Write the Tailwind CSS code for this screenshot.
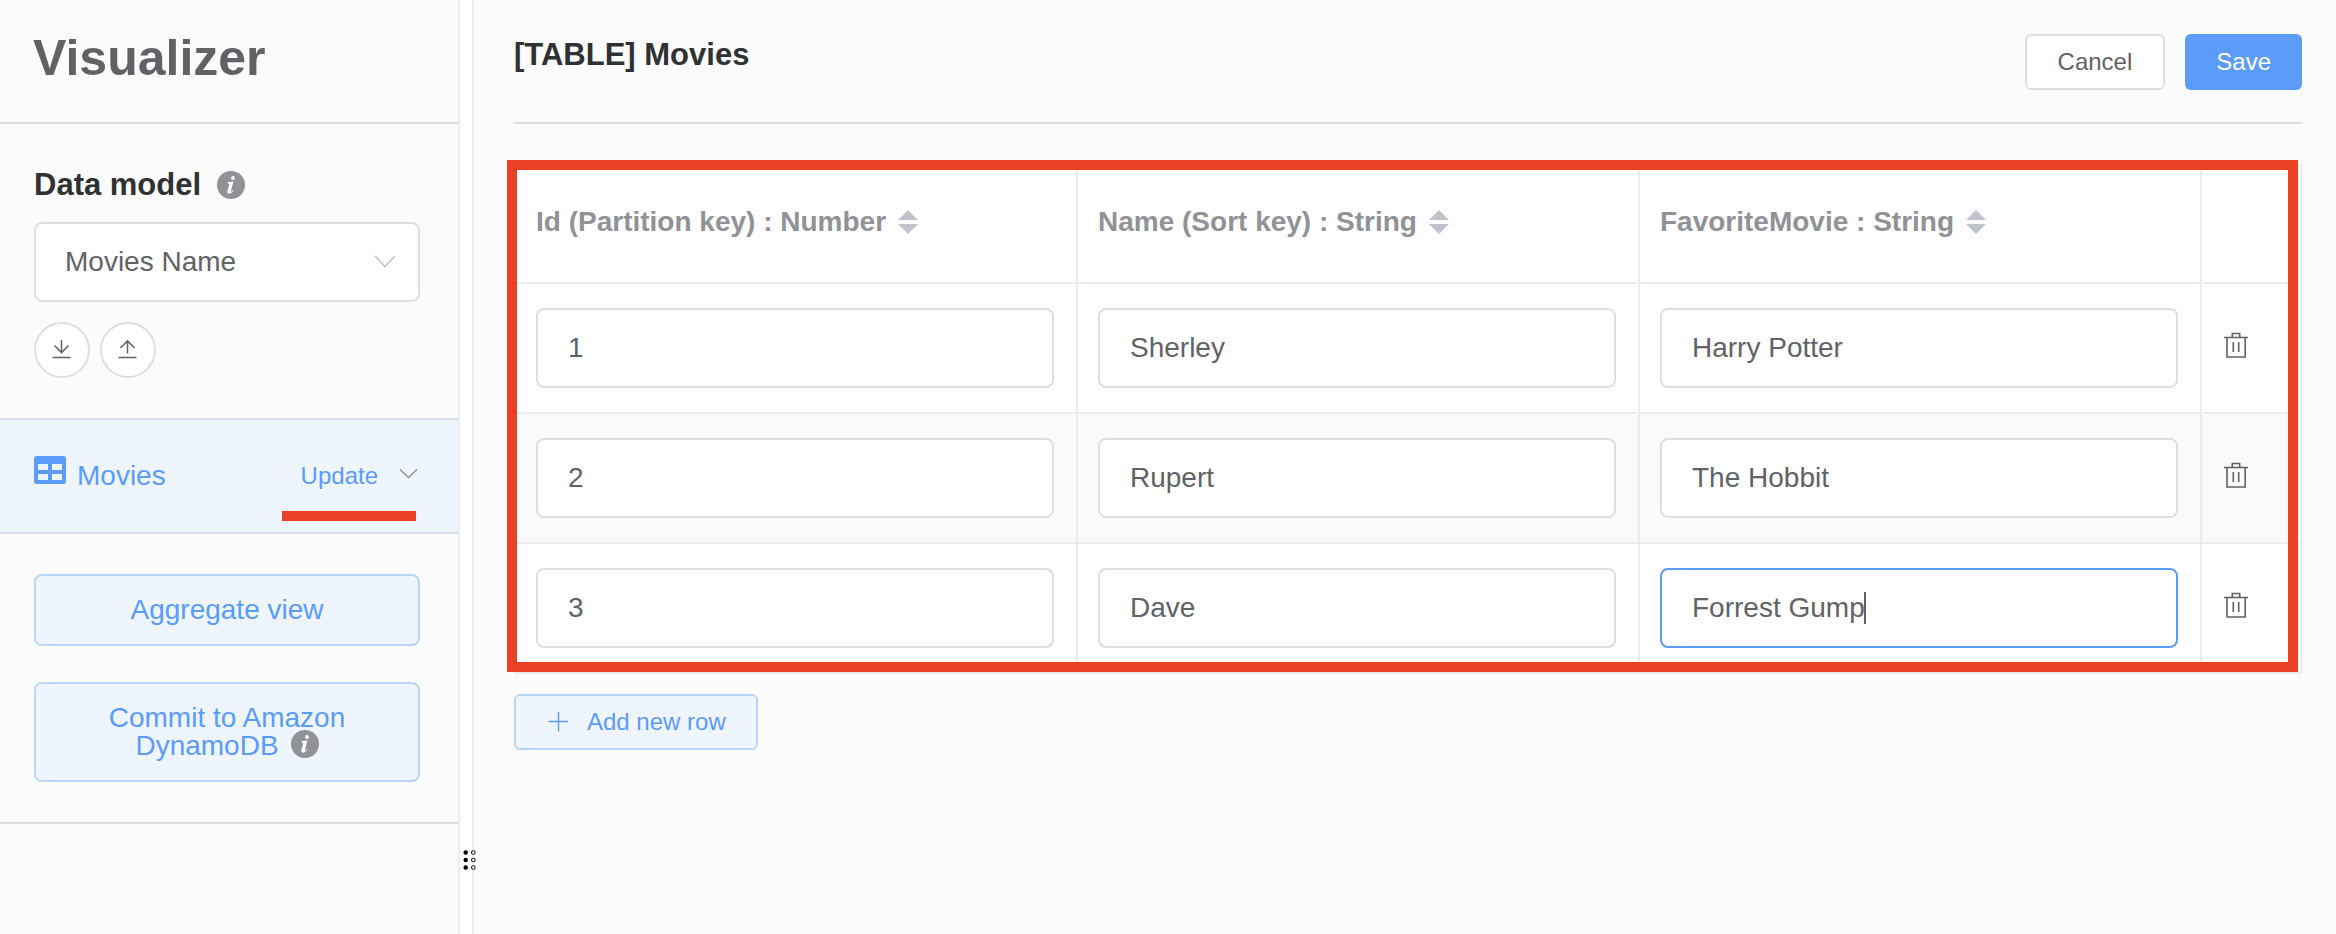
<!DOCTYPE html>
<html lang="en">
<head>
<meta charset="utf-8">
<meta name="viewport" content="width=device-width, initial-scale=1">
<title>Visualizer</title>
<script src="https://cdn.jsdelivr.net/npm/@tailwindcss/browser@4"></script>
</head>
<body class="bg-[#fbfbfb] font-['Liberation_Sans',Arial,sans-serif] text-[28px] text-[#616266]">
<svg class="hidden" aria-hidden="true">
  <symbol id="info" viewBox="0 0 28 28">
    <circle cx="14" cy="14" r="14" fill="#919297"/>
    <circle cx="16" cy="7" r="1.9" fill="#fff"/>
    <path fill="#fff" d="M10.4 11.3 16.4 10.6 13.9 20Q13.7 21 14.6 20.4L15.8 19 16.5 19.5Q14.2 22.8 11.9 22.7 9.9 22.4 10.4 20.2L12.2 13.6Q12.4 12.3 10.4 12.2Z"/>
  </symbol>
  <symbol id="sort" viewBox="0 0 20 24">
    <path fill="#c0c3cc" d="M10 0 20 10H0ZM10 24 0 14H20Z"/>
  </symbol>
  <symbol id="trash" viewBox="0 0 28 28">
    <path fill="none" stroke="#616266" stroke-width="1.6" d="M2 6.5H26M10.3 6V2.5H17.7V6M5 7V26H23.2V7M11.3 11V21M16.7 11V21"/>
  </symbol>
</svg>
<div class="flex min-h-screen">
  <aside class="w-[460px] shrink-0 border-r-2 border-[#ebebf0]">
    <header class="border-b-2 border-[#dddee4] px-[33px] pt-7 pb-[34px]">
      <h1 class="text-[50px] leading-[60px] font-bold">Visualizer</h1>
    </header>
    <section class="pt-10 pr-[38px] pb-10 pl-[34px]">
      <div class="flex items-center gap-4">
        <label for="model" class="text-[31px] leading-[42px] font-bold text-[#303133]">Data model</label>
        <svg class="size-7"><use href="#info"/></svg>
      </div>
      <div class="relative mt-4">
        <select id="model" class="h-20 w-full appearance-none rounded-lg border-2 border-[#dddee4] bg-white px-[29px]">
          <option>Movies Name</option>
        </select>
        <svg class="pointer-events-none absolute top-8 right-6 h-4 w-[22px]" viewBox="0 0 22 16" fill="none" stroke="#c0c4cc" stroke-width="1.6"><path d="M1 2 11 12.5 21 2"/></svg>
      </div>
      <div class="mt-5 flex gap-2.5">
        <button aria-label="Import" class="flex size-14 items-center justify-center rounded-full border-2 border-[#dddee4] bg-white">
          <svg class="size-6" viewBox="0 0 24 24" fill="none" stroke="#616266" stroke-width="1.5"><path d="M2.5 19.5H20.5M11.5 2V14.5M4.5 7.5 11.5 14.6 18.5 7.5"/></svg>
        </button>
        <button aria-label="Export" class="flex size-14 items-center justify-center rounded-full border-2 border-[#dddee4] bg-white">
          <svg class="size-6" viewBox="0 0 24 24" fill="none" stroke="#616266" stroke-width="1.5"><path d="M2.5 19.5H20.5M11.5 15.5V3M4.5 10 11.5 2.9 18.5 10"/></svg>
        </button>
      </div>
    </section>
    <nav class="flex h-[116px] items-center border-y-2 border-[#dddee4] bg-[#eef5ff] pr-10 pl-[34px] text-[#5b9bf9]">
      <a href="#" class="flex items-center gap-[11px]">
        <svg class="mb-3 h-7 w-8" viewBox="0 0 32 28"><path fill="#5b9bf9" fill-rule="evenodd" d="M3 0H29Q32 0 32 3V25Q32 28 29 28H3Q0 28 0 25V3Q0 0 3 0ZM4 8V14H14V8ZM18 8V14H28V8ZM4 18V24H14V18ZM18 18V24H28V18Z"/></svg>
        Movies
      </a>
      <button class="relative ml-auto flex items-center gap-5 text-2xl">
        Update
        <svg class="mb-1 h-3 w-5" viewBox="0 0 20 12" fill="none" stroke="#919297" stroke-width="1.5"><path d="M2 1.5 10.5 9.5 19 1.5"/></svg>
        <span class="absolute top-[51px] right-0.5 h-2.5 w-[134px] bg-[#ea4025]"></span>
      </button>
    </nav>
    <section class="flex flex-col gap-9 border-b-2 border-[#dddee4] pt-10 pr-[38px] pb-10 pl-[34px] leading-7 text-[#5b9bf9]">
      <button class="rounded-lg border-2 border-[#b8d5fb] bg-[#eef5ff] py-5">Aggregate view</button>
      <button class="flex flex-col items-center rounded-lg border-2 border-[#b8d5fb] bg-[#eef5ff] py-5">
        <span>Commit to Amazon</span>
        <span class="flex gap-3">DynamoDB <svg class="-mt-0.5 size-7"><use href="#info"/></svg></span>
      </button>
    </section>
  </aside>

  <div class="relative w-3.5 shrink-0 cursor-col-resize border-r-2 border-[#ebebf0] bg-white">
    <svg class="absolute bottom-16 left-[3px] h-5 w-3.5" viewBox="0 0 14 20"><g fill="#000"><circle cx="2.7" cy="2.5" r="2.2"/><circle cx="2.7" cy="10" r="2.2"/><circle cx="2.7" cy="17.5" r="2.2"/></g><g fill="#fff" stroke="#222" stroke-width="1.1"><circle cx="10.3" cy="2.5" r="1.8"/><circle cx="10.3" cy="10" r="1.8"/><circle cx="10.3" cy="17.5" r="1.8"/></g></svg>
  </div>

  <main class="min-w-0 flex-1 pr-[34px] pl-10">
    <header class="flex items-start gap-5 border-b-2 border-[#dddee4] pt-[34px] pb-8 text-2xl">
      <h2 class="mr-auto text-[31px] leading-[42px] font-bold text-[#303133]">[TABLE] Movies</h2>
      <button class="h-14 rounded-md border-2 border-[#dddee4] bg-white px-[31px]">Cancel</button>
      <button class="h-14 rounded-md bg-[#5b9bf9] px-[31px] text-white">Save</button>
    </header>

    <div class="relative mt-10">
      <table class="w-full table-fixed border-separate border-spacing-0 border-t-2 border-l-2 border-[#ebebf2] bg-white">
        <colgroup><col><col><col><col class="w-[100px]"></colgroup>
        <thead class="text-left leading-8 text-[#919297]">
          <tr>
            <th class="border-r-2 border-b-2 border-[#ebebf2] px-5 pt-10 pb-11"><span class="flex items-center gap-3">Id (Partition key) : Number <svg class="h-6 w-5"><use href="#sort"/></svg></span></th>
            <th class="border-r-2 border-b-2 border-[#ebebf2] px-5 pt-10 pb-11"><span class="flex items-center gap-3">Name (Sort key) : String <svg class="h-6 w-5"><use href="#sort"/></svg></span></th>
            <th class="border-r-2 border-b-2 border-[#ebebf2] px-5 pt-10 pb-11"><span class="flex items-center gap-3">FavoriteMovie : String <svg class="h-6 w-5"><use href="#sort"/></svg></span></th>
            <th class="border-r-2 border-b-2 border-[#ebebf2]"></th>
          </tr>
        </thead>
        <tbody>
          <tr>
            <td class="border-r-2 border-b-2 border-[#ebebf2] py-6 pr-[22px] pl-5"><input aria-label="Id, row 1" value="1" class="block h-20 w-full rounded-lg border-2 border-[#dddee4] bg-white px-[30px]"></td>
            <td class="border-r-2 border-b-2 border-[#ebebf2] py-6 pr-[22px] pl-5"><input aria-label="Name, row 1" value="Sherley" class="block h-20 w-full rounded-lg border-2 border-[#dddee4] bg-white px-[30px]"></td>
            <td class="border-r-2 border-b-2 border-[#ebebf2] py-6 pr-[22px] pl-5"><input aria-label="FavoriteMovie, row 1" value="Harry Potter" class="block h-20 w-full rounded-lg border-2 border-[#dddee4] bg-white px-[30px]"></td>
            <td class="border-r-2 border-b-2 border-[#ebebf2] px-5 pb-1.5"><button aria-label="Delete row 1" class="block"><svg class="size-7"><use href="#trash"/></svg></button></td>
          </tr>
          <tr class="bg-[#fafafa]">
            <td class="border-r-2 border-b-2 border-[#ebebf2] py-6 pr-[22px] pl-5"><input aria-label="Id, row 2" value="2" class="block h-20 w-full rounded-lg border-2 border-[#dddee4] bg-white px-[30px]"></td>
            <td class="border-r-2 border-b-2 border-[#ebebf2] py-6 pr-[22px] pl-5"><input aria-label="Name, row 2" value="Rupert" class="block h-20 w-full rounded-lg border-2 border-[#dddee4] bg-white px-[30px]"></td>
            <td class="border-r-2 border-b-2 border-[#ebebf2] py-6 pr-[22px] pl-5"><input aria-label="FavoriteMovie, row 2" value="The Hobbit" class="block h-20 w-full rounded-lg border-2 border-[#dddee4] bg-white px-[30px]"></td>
            <td class="border-r-2 border-b-2 border-[#ebebf2] px-5 pb-1.5"><button aria-label="Delete row 2" class="block"><svg class="size-7"><use href="#trash"/></svg></button></td>
          </tr>
          <tr>
            <td class="border-r-2 border-b-2 border-[#ebebf2] py-6 pr-[22px] pl-5"><input aria-label="Id, row 3" value="3" class="block h-20 w-full rounded-lg border-2 border-[#dddee4] bg-white px-[30px]"></td>
            <td class="border-r-2 border-b-2 border-[#ebebf2] py-6 pr-[22px] pl-5"><input aria-label="Name, row 3" value="Dave" class="block h-20 w-full rounded-lg border-2 border-[#dddee4] bg-white px-[30px]"></td>
            <td class="border-r-2 border-b-2 border-[#ebebf2] py-6 pr-[22px] pl-5">
              <div class="relative">
                <input aria-label="FavoriteMovie, row 3" value="Forrest Gump" class="block h-20 w-full rounded-lg border-2 border-[#5b9bf9] bg-white px-[30px] outline-none">
                <span class="absolute top-6 left-[204px] h-8 w-0.5 bg-[#616266]"></span>
              </div>
            </td>
            <td class="border-r-2 border-b-2 border-[#ebebf2] px-5 pb-1.5"><button aria-label="Delete row 3" class="block"><svg class="size-7"><use href="#trash"/></svg></button></td>
          </tr>
        </tbody>
      </table>
      <div class="pointer-events-none absolute -top-1 right-1 bottom-0.5 -left-[7px] border-10 border-[#ea4025]"></div>
    </div>

    <button class="mt-5 flex h-14 items-center gap-[17px] rounded-md border-2 border-[#b8d5fb] bg-[#eef5ff] px-[30px] text-2xl text-[#5b9bf9]">
      <svg class="size-6" viewBox="0 0 24 24" stroke="#5b9bf9" stroke-width="1.4"><path d="M2.5 11.5H22M12.5 2V21.5"/></svg>
      Add new row
    </button>
  </main>
</div>
</body>
</html>
